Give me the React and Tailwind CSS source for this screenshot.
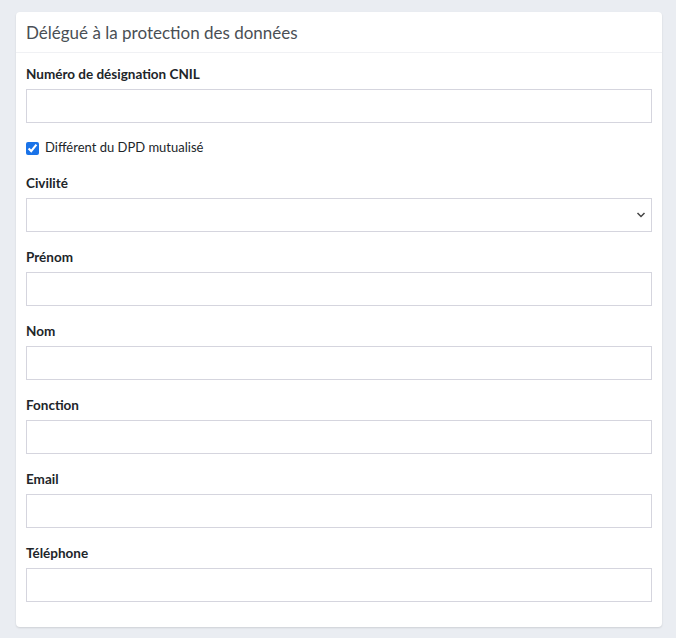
import React from 'react';

const FIELDS = ["Prénom", "Nom", "Fonction", "Email", "Téléphone"];

const Label = ({ children }) => (
  <label className="block h-[20px] mb-[5px] text-[13.5px] leading-[20px] font-bold text-[#212529]">{children}</label>
);

const Input = () => (
  <input type="text" className="block w-full h-[34px] border border-[#d5d5de] bg-white px-2 text-[13px] outline-none" />
);

export default function App() {
  return (
    <div className="min-h-[638px] bg-[#eaedf2] pl-4 pr-[14px] pt-3 pb-[11px]" style={{ fontFamily: 'Lato, "Noto Sans", sans-serif' }}>
      <div className="bg-white rounded-[4px] shadow-[0_1px_2px_rgba(0,0,0,0.12)]">
        <div className="h-[41px] px-[10px] flex items-center border-b border-[#f0f1f4]">
          <h2 className="text-[17px] text-[#4a4f55] leading-none">Délégué à la protection des données</h2>
        </div>
        <div className="px-[10px] pt-[11px] pb-[10px]">
          <div className="mb-4">
            <Label>Numéro de désignation CNIL</Label>
            <Input />
          </div>
          <label className="flex items-center gap-[6px] h-[18px] mb-4 text-[13px] text-[#212529]">
            <input type="checkbox" defaultChecked className="w-[13px] h-[13px] accent-[#1a73e8]" />
            <span>Différent du DPD mutualisé</span>
          </label>
          <div className="mb-[15px]">
            <Label>Civilité</Label>
            <div className="relative h-[34px] border border-[#d5d5de] bg-white">
              <svg className="absolute right-[5px] top-[12px]" width="10" height="8" viewBox="0 0 10 8">
                <path d="M1.5 2 L5 5.5 L8.5 2" fill="none" stroke="#444" strokeWidth="1.5" />
              </svg>
            </div>
          </div>
          {FIELDS.map((f) => (
            <div key={f} className="mb-[15px]">
              <Label>{f}</Label>
              <Input />
            </div>
          ))}
        </div>
      </div>
    </div>
  );
}
